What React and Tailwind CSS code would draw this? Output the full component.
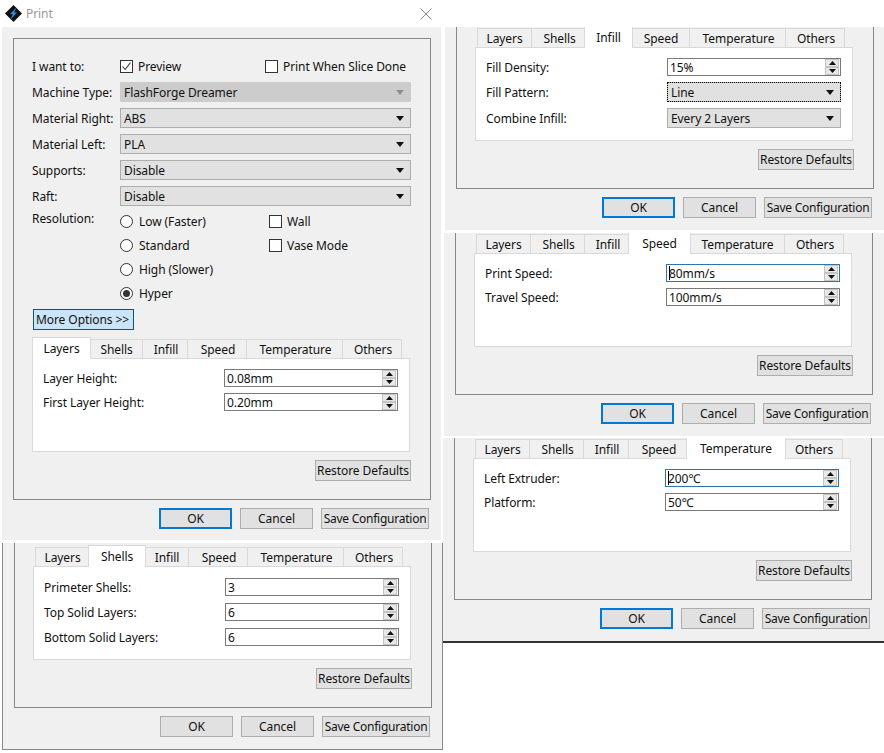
import React from "react";

const tabs = [
    { name: "Layers", w: "w-[55px]", wa: "w-[59px]" },
    { name: "Shells", w: "w-[54px]", wa: "w-[58px]" },
    { name: "Infill", w: "w-[45px]", wa: "w-[49px]" },
    { name: "Speed", w: "w-[59px]", wa: "w-[63px]" },
    { name: "Temperature", w: "w-[96px]", wa: "w-[100px]" },
    { name: "Others", w: "w-[59px]", wa: "w-[59px]" },
];

const Arrow = ({ disabled }) => (
    <svg width="8" height="5" viewBox="0 0 8 5" className="shrink-0">
        <polygon points="0,0 8,0 4,5" fill={disabled ? "#8f8f8f" : "#111111"} />
    </svg>
);

const Select = ({ value, disabled, focused, className = "w-[174px]" }) => (
    <div
        className={`h-[20px] flex items-center justify-between pl-[3px] pr-[6px] border ${className} ${
            disabled
                ? "bg-[#cccccc] border-[#cccccc]"
                : "bg-[#e1e1e1] border-[#adadad]"
        } ${focused ? "outline outline-dotted outline-black -outline-offset-1" : ""}`}
    >
        <span className="pt-px">{value}</span>
        <Arrow disabled={disabled} />
    </div>
);

const SpinCell = ({ up }) => (
    <div className="h-[8px] w-[14px] flex items-center justify-center bg-[#e8e8e8] border border-[#c4c4c4]">
        <svg width="7" height="4" viewBox="0 0 7 4">
            <polygon
                points={up ? "0,4 7,4 3.5,0" : "0,0 7,0 3.5,4"}
                fill="#111111"
            />
        </svg>
    </div>
);

const Spin = ({ value, focused }) => (
    <div
        className={`h-[18px] w-[174px] bg-white flex items-center border pl-[2px] pr-[1px] ${
            focused ? "border-[#2f74a8]" : "border-[#7a7a7a]"
        }`}
    >
        <span className="flex-1 relative pt-px">
            {focused && (
                <span className="absolute left-0 top-[1px] h-[14px] w-px bg-black" />
            )}
            {value}
        </span>
        <div className="flex flex-col">
            <SpinCell up />
            <SpinCell />
        </div>
    </div>
);

const Button = ({ label, className = "", focused }) => (
    <div
        className={`h-[21px] pt-px whitespace-nowrap flex items-center justify-center ${className} ${
            focused
                ? "border-2 border-[#0078d7] bg-[#e1e1e1]"
                : "border border-[#adadad] bg-[#e1e1e1]"
        }`}
    >
        {label}
    </div>
);

const Checkbox = ({ checked }) => (
    <span className="w-[13px] h-[13px] shrink-0 border border-[#333333] bg-white flex items-center justify-center">
        {checked && (
            <svg width="11" height="11" viewBox="0 0 11 11">
                <path d="M1.5 5.5 L4.2 8.5 L9.5 1.5" fill="none" stroke="#333333" strokeWidth="1.1" />
            </svg>
        )}
    </span>
);

const Radio = ({ checked }) => (
    <span className="w-[13px] h-[13px] shrink-0 rounded-full border border-[#333333] bg-white flex items-center justify-center">
        {checked && <span className="w-[7px] h-[7px] rounded-full bg-[#333333]" />}
    </span>
);

const TabBox = ({ active, rows, rowGap, rowPad = "pt-[10px]" }) => (
    <div className="ml-[18px] w-[379px]">
        <div className="relative z-10 -mb-px h-[22px] pl-[2px] flex items-start">
            {tabs.map((tab, i) =>
                tab.name === active ? (
                    <div
                        key={tab.name}
                        className={`relative z-10 h-[22px] -mx-[2px] bg-white border-t border-x border-[#d9d9d9] flex items-center justify-center ${tab.wa}`}
                    >
                        {tab.name}
                    </div>
                ) : (
                    <div
                        key={tab.name}
                        className={`mt-[2px] h-[19px] pt-px bg-[#f0f0f0] border-t border-r border-[#d9d9d9] flex items-center justify-center ${tab.w} ${
                            i === 0 ? "border-l" : "pl-[2px]"
                        }`}
                    >
                        {tab.name}
                    </div>
                ),
            )}
        </div>
        <div
            className={`h-[94px] w-[378px] bg-white border border-[#d9d9d9] pl-[10px] flex flex-col ${rowPad} ${rowGap}`}
        >
            {rows.map((row) => (
                <div key={row.label} className="flex items-center">
                    <span className="w-[181px] pt-px">{row.label}</span>
                    {row.control}
                </div>
            ))}
        </div>
        <div className="mt-2 flex justify-end">
            <Button label="Restore Defaults" className="w-[96px]" />
        </div>
    </div>
);

const Footer = ({ focused }) => (
    <div className="mt-2 ml-[11px] w-[418px] pr-[2px] flex justify-end gap-2">
        <Button label="OK" className="w-[73px]" focused={focused} />
        <Button label="Cancel" className="w-[73px]" />
        <Button label="Save Configuration" className="w-[108px] tracking-[-0.25px]" />
    </div>
);

const Page = ({ className, topGap, active, rows, rowPad, rowGap = "gap-[6px]", focused = true }) => (
    <div className={`absolute bg-[#f0f0f0] overflow-hidden ${className}`}>
        <div className={`ml-[11px] w-[418px] pb-[18px] border-x border-b border-[#888888] ${topGap}`}>
            <TabBox active={active} rows={rows} rowGap={rowGap} rowPad={rowPad} />
        </div>
        <Footer focused={focused} />
    </div>
);

const Logo = () => (
    <svg width="17" height="17" viewBox="0 0 17 17">
        <polygon points="8.5,0 17,8.5 8.5,17 0,8.5" fill="#111111" />
        <polygon points="11.5,2.5 5,9 7.8,9 5.5,14.5 12,7.5 9.2,7.5" fill="#2a8fd8" />
    </svg>
);

const FormRow = ({ label, children }) => (
    <div className="flex items-center">
        <span className="w-[88px] pt-px">{label}</span>
        {children}
    </div>
);

const MainWindow = () => (
    <div className="absolute left-[2px] top-0 w-[439px]">
        <div className="h-[27px] flex items-center justify-between pl-[3px] pr-[9px]">
            <div className="flex items-center gap-[4px]">
                <Logo />
                <span className="text-[#999999]">Print</span>
            </div>
            <svg width="12" height="12" viewBox="0 0 12 12">
                <path d="M0.5 0.5 L11.5 11.5 M11.5 0.5 L0.5 11.5" stroke="#8a8a8a" fill="none" />
            </svg>
        </div>
        <div className="bg-[#f0f0f0] pt-[11px] h-[513px]">
            <div className="ml-[11px] w-[418px] pb-[18px] pt-[19px] border border-[#888888]">
                <div className="pl-[18px] flex flex-col">
                    <FormRow label="I want to:">
                        <div className="flex items-center gap-[5px] w-[145px]">
                            <Checkbox checked />
                            <span className="pt-px">Preview</span>
                        </div>
                        <div className="flex items-center gap-[5px]">
                            <Checkbox />
                            <span className="pt-px">Print When Slice Done</span>
                        </div>
                    </FormRow>
                    <div className="mt-[7px] flex flex-col gap-[6px]">
                        <FormRow label="Machine Type:">
                            <Select value="FlashForge Dreamer" disabled className="w-[291px]" />
                        </FormRow>
                        <FormRow label="Material Right:">
                            <Select value="ABS" className="w-[291px]" />
                        </FormRow>
                        <FormRow label="Material Left:">
                            <Select value="PLA" className="w-[291px]" />
                        </FormRow>
                        <FormRow label="Supports:">
                            <Select value="Disable" className="w-[291px]" />
                        </FormRow>
                        <FormRow label="Raft:">
                            <Select value="Disable" className="w-[291px]" />
                        </FormRow>
                    </div>
                    <div className="mt-[3px] flex">
                        <span className="w-[88px] mt-[2px]">Resolution:</span>
                        <div className="w-[149px]">
                            {["Low (Faster)", "Standard", "High (Slower)", "Hyper"].map((r) => (
                                <div key={r} className="h-[24px] flex items-center gap-[6px]">
                                    <Radio checked={r === "Hyper"} />
                                    <span className="pt-px">{r}</span>
                                </div>
                            ))}
                        </div>
                        <div>
                            {["Wall", "Vase Mode"].map((r) => (
                                <div key={r} className="h-[24px] flex items-center gap-[5px]">
                                    <Checkbox />
                                    <span className="pt-px">{r}</span>
                                </div>
                            ))}
                        </div>
                    </div>
                    <div className="mt-[4px] ml-[1px] h-[21px] w-[101px] pt-px bg-[#cce4f7] border border-[#005499] pl-[2px] flex items-center whitespace-nowrap">
                        {"More Options >>"}
                    </div>
                </div>
                <div className="mt-[7px]">
                    <TabBox
                        active="Layers"
                        rowGap="gap-[6px]"
                        rows={[
                            { label: "Layer Height:", control: <Spin value="0.08mm" /> },
                            { label: "First Layer Height:", control: <Spin value="0.20mm" /> },
                        ]}
                    />
                </div>
            </div>
            <Footer focused />
        </div>
    </div>
);

const App = () => {
    return (
        <div className="relative w-[884px] h-[753px] overflow-hidden bg-white text-[12px] leading-[16px] tracking-[-0.08px] text-[#111111] font-['Noto_Sans','Noto_Sans_CJK_SC',sans-serif]">
            <MainWindow />
            <div className="absolute left-[2px] top-[543px] w-[441px] h-[207px] border-x border-b border-[#888888]" />
            <Page
                className="left-[3px] top-[543px] w-[439px] h-[206px]"
                topGap="pt-[2px]"
                active="Shells"
                focused={false}
                rowPad="pt-[11px]"
                rowGap="gap-[7px]"
                rows={[
                    { label: "Primeter Shells:", control: <Spin value="3" /> },
                    { label: "Top Solid Layers:", control: <Spin value="6" /> },
                    { label: "Bottom Solid Layers:", control: <Spin value="6" /> },
                ]}
            />
            <Page
                className="left-[445px] top-[27px] w-[439px] h-[203px]"
                topGap="-mt-px"
                active="Infill"
                rows={[
                    { label: "Fill Density:", control: <Spin value="15%" /> },
                    { label: "Fill Pattern:", control: <Select value="Line" focused /> },
                    { label: "Combine Infill:", control: <Select value="Every 2 Layers" /> },
                ]}
            />
            <Page
                className="left-[444px] top-[233px] w-[440px] h-[203px]"
                topGap="-mt-px"
                active="Speed"
                rows={[
                    { label: "Print Speed:", control: <Spin value="80mm/s" focused /> },
                    { label: "Travel Speed:", control: <Spin value="100mm/s" /> },
                ]}
            />
            <Page
                className="left-[443px] top-[438px] w-[441px] h-[205px] border-b-2 border-[#333333]"
                topGap="-mt-px"
                active="Temperature"
                rows={[
                    { label: "Left Extruder:", control: <Spin value="200℃" focused /> },
                    { label: "Platform:", control: <Spin value="50℃" /> },
                ]}
            />
        </div>
    );
};

export default App;
